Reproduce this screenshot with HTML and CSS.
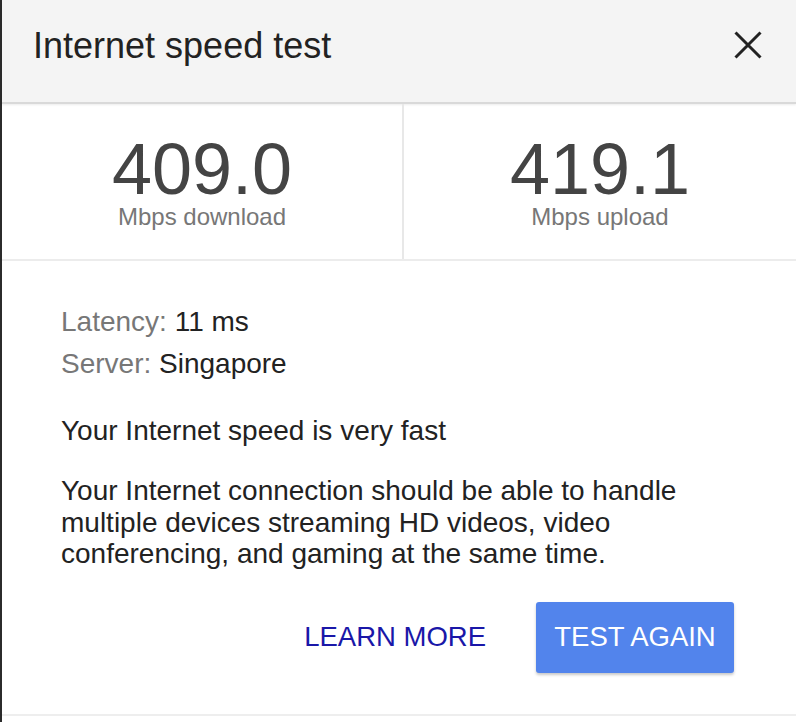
FILE: index.html
```html
<!DOCTYPE html>
<html lang="en">
<head>
    <meta charset="UTF-8">
    <title>Internet speed test</title>
    <link rel="stylesheet" href="styles.css">
</head>
<body>
    <div class="dialog">
        <div class="header">
            <h1 class="title">Internet speed test</h1>
            <button class="close" aria-label="Close">
                <svg width="28" height="28" viewBox="0 0 28 28" fill="none" xmlns="http://www.w3.org/2000/svg">
                    <path d="M1.5 1.5L26.5 26.5M26.5 1.5L1.5 26.5" stroke="#222" stroke-width="3"/>
                </svg>
            </button>
        </div>
        <div class="stats">
            <div class="stat stat-download">
                <div class="stat-value">409.0</div>
                <div class="stat-label">Mbps download</div>
            </div>
            <div class="stat">
                <div class="stat-value">419.1</div>
                <div class="stat-label">Mbps upload</div>
            </div>
        </div>
        <div class="details">
            <div class="meta"><span class="meta-key">Latency:</span> 11 ms</div>
            <div class="meta meta-server"><span class="meta-key">Server:</span> Singapore</div>
            <p class="verdict">Your Internet speed is very fast</p>
            <p class="summary">Your Internet connection should be able to handle multiple devices streaming HD videos, video conferencing, and gaming at the same time.</p>
            <div class="actions">
                <button class="btn-flat">LEARN MORE</button>
                <button class="btn-raised">TEST AGAIN</button>
            </div>
        </div>
    </div>
</body>
</html>
```

FILE: styles.css
```css
body {
    font-family: 'Liberation Sans', Arial, sans-serif;
    color: #222;
    background-color: #fff;
    margin: 0;
}
.dialog {
    min-height: 100vh;
    border-left: 2px solid #2b2b2b;
    box-sizing: border-box;
}
.header {
    height: 104px;
    display: flex;
    align-items: center;
    justify-content: space-between;
    padding: 0 34px 11px 31px;
    background-color: #f4f4f4;
    border-bottom: 2px solid #d9d9d9;
    box-shadow: 0 1px 2px rgba(0, 0, 0, 0.08);
    box-sizing: border-box;
}
.title {
    margin: 0;
    font-size: 36px;
    font-weight: normal;
    line-height: 36px;
    color: #222;
}
.close {
    display: flex;
    padding: 0;
    border: none;
    background: none;
    margin-top: -2px;
}
.stats {
    display: flex;
    border-bottom: 2px solid #ececec;
}
.stat {
    flex: 1;
    text-align: center;
    padding: 29px 0 30px;
}
.stat-download {
    flex: 0 0 400px;
    border-right: 2px solid #e8e8e8;
}
.stat-value {
    font-size: 72px;
    line-height: 72px;
    color: #444;
}
.stat-label {
    font-size: 24px;
    line-height: 24px;
    color: #777;
}
.details {
    padding: 45px 60px 41px 59px;
    border-bottom: 2px solid #eee;
    font-size: 28px;
    line-height: 32px;
}
.meta-key {
    color: #777;
}
.meta-server {
    margin-top: 10px;
}
.verdict {
    margin: 35px 0 0;
}
.summary {
    margin: 28px 0 0;
    line-height: 31.5px;
}
.actions {
    display: flex;
    justify-content: flex-end;
    align-items: center;
    gap: 34px;
    margin-top: 32px;
    padding-right: 2px;
}
.actions button {
    height: 71px;
    font-family: inherit;
    font-size: 27.5px;
    border: none;
    border-radius: 3px;
    cursor: pointer;
}
.btn-flat {
    padding: 0 16px;
    background: none;
    color: #1a17a8;
}
.btn-raised {
    width: 198px;
    padding: 0;
    background-color: #5284ec;
    color: #fff;
    box-shadow: 0 2px 3px rgba(0, 0, 0, 0.22);
}
```
